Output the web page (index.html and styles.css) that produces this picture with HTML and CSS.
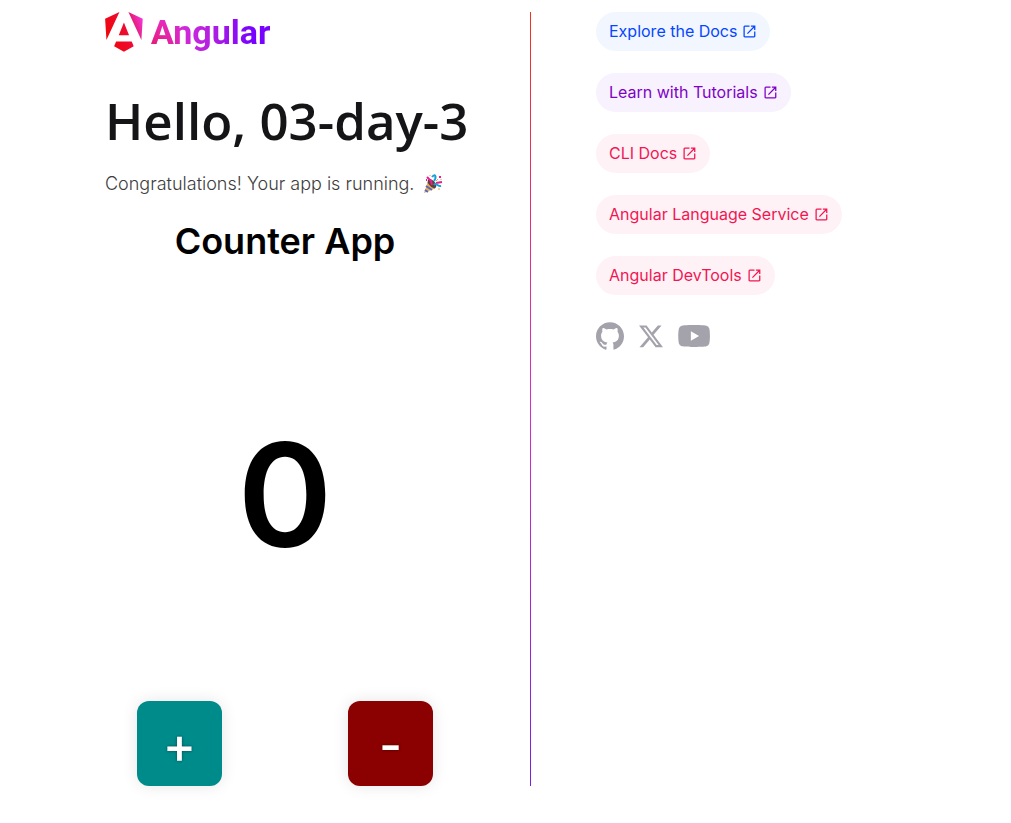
FILE: index.html
```
<!DOCTYPE html>
<html lang="en">
<head>
<meta charset="utf-8">
<meta name="viewport" content="width=device-width, initial-scale=1">
<title>03-day-3</title>
<link rel="stylesheet" href="styles.css">
</head>
<body>
<svg class="sprite" aria-hidden="true">
  <symbol id="open" viewBox="0 -960 960 960"><path d="M212-144q-29 0-50-21t-22-51v-528q0-30 21-51t51-21h268v72H212v528h528v-264h72v264q0 30-21 51t-51 21H212Zm176-188-51-51 353-361H560v-72h252v252h-72v-129L388-332Z"/></symbol>
</svg>
<main class="content">
  <section class="left-side">
    <div class="logo">
      <svg class="logo-mark" viewBox="0 0 223 236" aria-hidden="true">
        <defs>
          <linearGradient id="shield" gradientUnits="userSpaceOnUse" x1="0" y1="120" x2="223" y2="40"><stop offset="0" stop-color="#f0060b"/><stop offset=".5" stop-color="#ee0b30"/><stop offset=".75" stop-color="#e51f7c"/><stop offset="1" stop-color="#f637e3"/></linearGradient>
        </defs>
        <path fill="url(#shield)" d="m222.077 39.192-8.019 125.923L137.387 0l84.690 39.192Zm-53.105 162.825-57.933 33.056-57.934-33.056 11.783-28.556h92.301l11.783 28.556ZM111.039 62.675l30.357 73.803H80.681l30.358-73.803ZM7.937 165.115 0 39.192 84.690 0 7.937 165.115Z"/>
      </svg>
      <span class="logo-name">Angular</span>
    </div>
    <h1 class="title">Hello, 03-day-3</h1>
    <p class="intro">Congratulations! Your app is running.
      <svg class="party" viewBox="0 0 20 20" role="img" aria-label="Party popper">
        <path fill="#e8b04c" d="M5 7 1 19l12-5Z"/>
        <path stroke="#5865c9" stroke-width="2" d="m3 12 6 4M2 16l3 2M5 8l7 6"/>
        <ellipse cx="9" cy="9.500" rx="3" ry="5.500" transform="rotate(-42 9 9.500)" fill="#5d4037"/>
        <path fill="none" stroke="#e91e8c" stroke-width="2" d="m4 3 4 4 1 4M13 9l6-1M16 3h2M3 6h1"/>
        <path fill="none" stroke="#169fdc" stroke-width="2" d="M9 3c3-4 5 0 2 4M11 11c2-3 4 2 7 1"/>
        <path stroke="#e8a33c" stroke-width="1" d="M7 1v1M15 5l-2 2M15 15h2M18 5v1"/>
      </svg>
    </p>
    <h2 class="counter-title">Counter App</h2>
    <output class="count">0</output>
    <div class="controls">
      <button class="step increase" type="button" aria-label="Increase">+</button>
      <button class="step decrease" type="button" aria-label="Decrease">-</button>
    </div>
  </section>
  <div class="divider" role="separator"></div>
  <section class="right-side">
    <nav class="pills">
      <a class="pill blue" href="#">Explore the Docs<svg class="open" aria-hidden="true"><use href="#open"/></svg></a>
      <a class="pill purple" href="#">Learn with Tutorials<svg class="open" aria-hidden="true"><use href="#open"/></svg></a>
      <a class="pill red" href="#">CLI Docs<svg class="open" aria-hidden="true"><use href="#open"/></svg></a>
      <a class="pill red" href="#">Angular Language Service<svg class="open" aria-hidden="true"><use href="#open"/></svg></a>
      <a class="pill red" href="#">Angular DevTools<svg class="open" aria-hidden="true"><use href="#open"/></svg></a>
    </nav>
    <div class="social">
      <a class="social-link" href="#" aria-label="Github"><svg width="28" height="28" viewBox="0 0 24 24"><path d="M12 .297c-6.630 0-12 5.373-12 12 0 5.303 3.438 9.800 8.205 11.385.6.113.82-.258.82-.577 0-.285-.01-1.040-.015-2.040-3.338.724-4.042-1.610-4.042-1.610C4.422 18.070 3.633 17.700 3.633 17.700c-1.087-.744.084-.729.084-.729 1.205.084 1.838 1.236 1.838 1.236 1.070 1.835 2.809 1.305 3.495.998.108-.776.417-1.305.76-1.605-2.665-.3-5.466-1.332-5.466-5.930 0-1.310.465-2.380 1.235-3.220-.135-.303-.54-1.523.105-3.176 0 0 1.005-.322 3.300 1.230.96-.267 1.980-.399 3-.405 1.020.006 2.040.138 3 .405 2.280-1.552 3.285-1.230 3.285-1.230.645 1.653.24 2.873.12 3.176.765.84 1.230 1.910 1.230 3.220 0 4.610-2.805 5.625-5.475 5.920.42.36.81 1.096.81 2.220 0 1.606-.015 2.896-.015 3.286 0 .315.21.69.825.57C20.565 22.092 24 17.592 24 12.297c0-6.627-5.373-12-12-12"/></svg></a>
      <a class="social-link" href="#" aria-label="X"><svg width="24" height="23" viewBox="0 0 24 22"><path d="M18.900 0h3.680l-8.040 9.190L24 21.700h-7.410l-5.800-7.580-6.640 7.580H.47l8.600-9.830L0 0h7.590l5.240 6.930L18.900 0Zm-1.290 19.500h2.040L6.480 2.080H4.300L17.610 19.500Z"/></svg></a>
      <a class="social-link" href="#" aria-label="Youtube"><svg width="32" height="22" viewBox="0 0 29 20"><path fill-rule="evenodd" d="M28.380 3.120A3.600 3.600 0 0 0 25.840.59C23.600 0 14.600 0 14.600 0S5.590 0 3.350.6A3.600 3.600 0 0 0 .8 3.120C.2 5.350.2 10 .2 10s0 4.650.6 6.880a3.600 3.600 0 0 0 2.550 2.530c2.240.6 11.250.6 11.250.6s9 0 11.240-.6a3.600 3.600 0 0 0 2.540-2.530C29 14.650 29 10 29 10s0-4.650-.62-6.880ZM11.650 14.230V5.770L19.140 10l-7.490 4.230Z"/></svg></a>
    </div>
  </section>
</main>
</body>
</html>
```
FILE: styles.css
```
* { box-sizing: border-box; }
body {
  margin: 0;
  background: #fff;
  color: #000;
  font-family: Inter, "Liberation Sans", sans-serif;
}
.sprite { display: none; }
.content {
  display: grid;
  grid-template-columns: minmax(0, 36fr) 1px minmax(0, 31fr);
  gap: 65px;
  padding: 12px 105px 37px;
}
.left-side { display: flex; flex-direction: column; }
.logo { display: flex; align-items: center; gap: 8px; height: 40px; }
.logo-mark { width: 38px; height: 40px; }
.logo-name {
  background: radial-gradient(circle at 0 90%, #e01a6e 0, #e01a6e00 40px), linear-gradient(90deg, #f637d8 0, #b41fe0 50%, #7702ff 85%);
  background-clip: text;
  -webkit-background-clip: text;
  color: transparent;
  font-family: Roboto, "Liberation Sans", sans-serif;
  font-size: 34px;
  font-weight: 700;
  line-height: 40px;
}
.title {
  margin: 36px 0 0;
  color: #151417;
  font-family: "Open Sans", "Noto Sans", sans-serif;
  font-size: 51px;
  font-weight: 600;
  line-height: 64px;
  white-space: nowrap;
}
.intro {
  margin: 20px 0 0;
  color: #3d3d3d;
  font-size: 18px;
  font-weight: 300;
  line-height: 24px;
  white-space: nowrap;
}
.party { width: 20px; height: 20px; margin-left: 3px; vertical-align: -4px; }
.counter-title {
  margin: 21px 0 0;
  font-size: 36px;
  font-weight: 600;
  line-height: 48px;
  text-align: center;
}
.count {
  margin-top: 142px;
  font-size: 144px;
  font-weight: 600;
  line-height: 176px;
  text-align: center;
}
.controls {
  display: flex;
  justify-content: space-between;
  margin-top: 118px;
  padding: 0 32px;
}
.step {
  width: 85px;
  height: 85px;
  padding: 4px 0 0;
  border: 0;
  border-radius: 12px;
  box-shadow: 0 0 16px #0000001a;
  color: #fff;
  font-family: Inter, "Liberation Sans", sans-serif;
  font-size: 50px;
  font-weight: 500;
  line-height: 81px;
  text-shadow: 0 0 3px #00000080;
}
.increase { background: #008b8b; }
.decrease { background: #8b0000; }
.divider { background: linear-gradient(180deg, #f5301c 0, #d82cc8 50%, #7a1ee0 100%); }
.pills { display: flex; flex-direction: column; align-items: flex-start; gap: 22px; }
.pill {
  display: flex;
  align-items: center;
  gap: 4px;
  padding: 8px 12px 8px 13px;
  border-radius: 24px;
  font-size: 16px;
  line-height: 23px;
  text-decoration: none;
  white-space: nowrap;
}
.open { width: 17px; height: 17px; fill: currentColor; }
.blue { background: #f2f7ff; color: #0546ff; }
.purple { background: #f7f2fd; color: #8001c6; }
.red { background: #fff2f6; color: #f11653; }
.social { display: flex; align-items: center; gap: 15px; margin-top: 27px; }
.social-link { display: flex; color: #a4a2ab; }
.social-link svg { fill: currentColor; }
@media (max-width: 800px) {
  .content { grid-template-columns: minmax(0, 1fr); gap: 32px; padding: 16px; }
  .divider { height: 1px; }
}
```
